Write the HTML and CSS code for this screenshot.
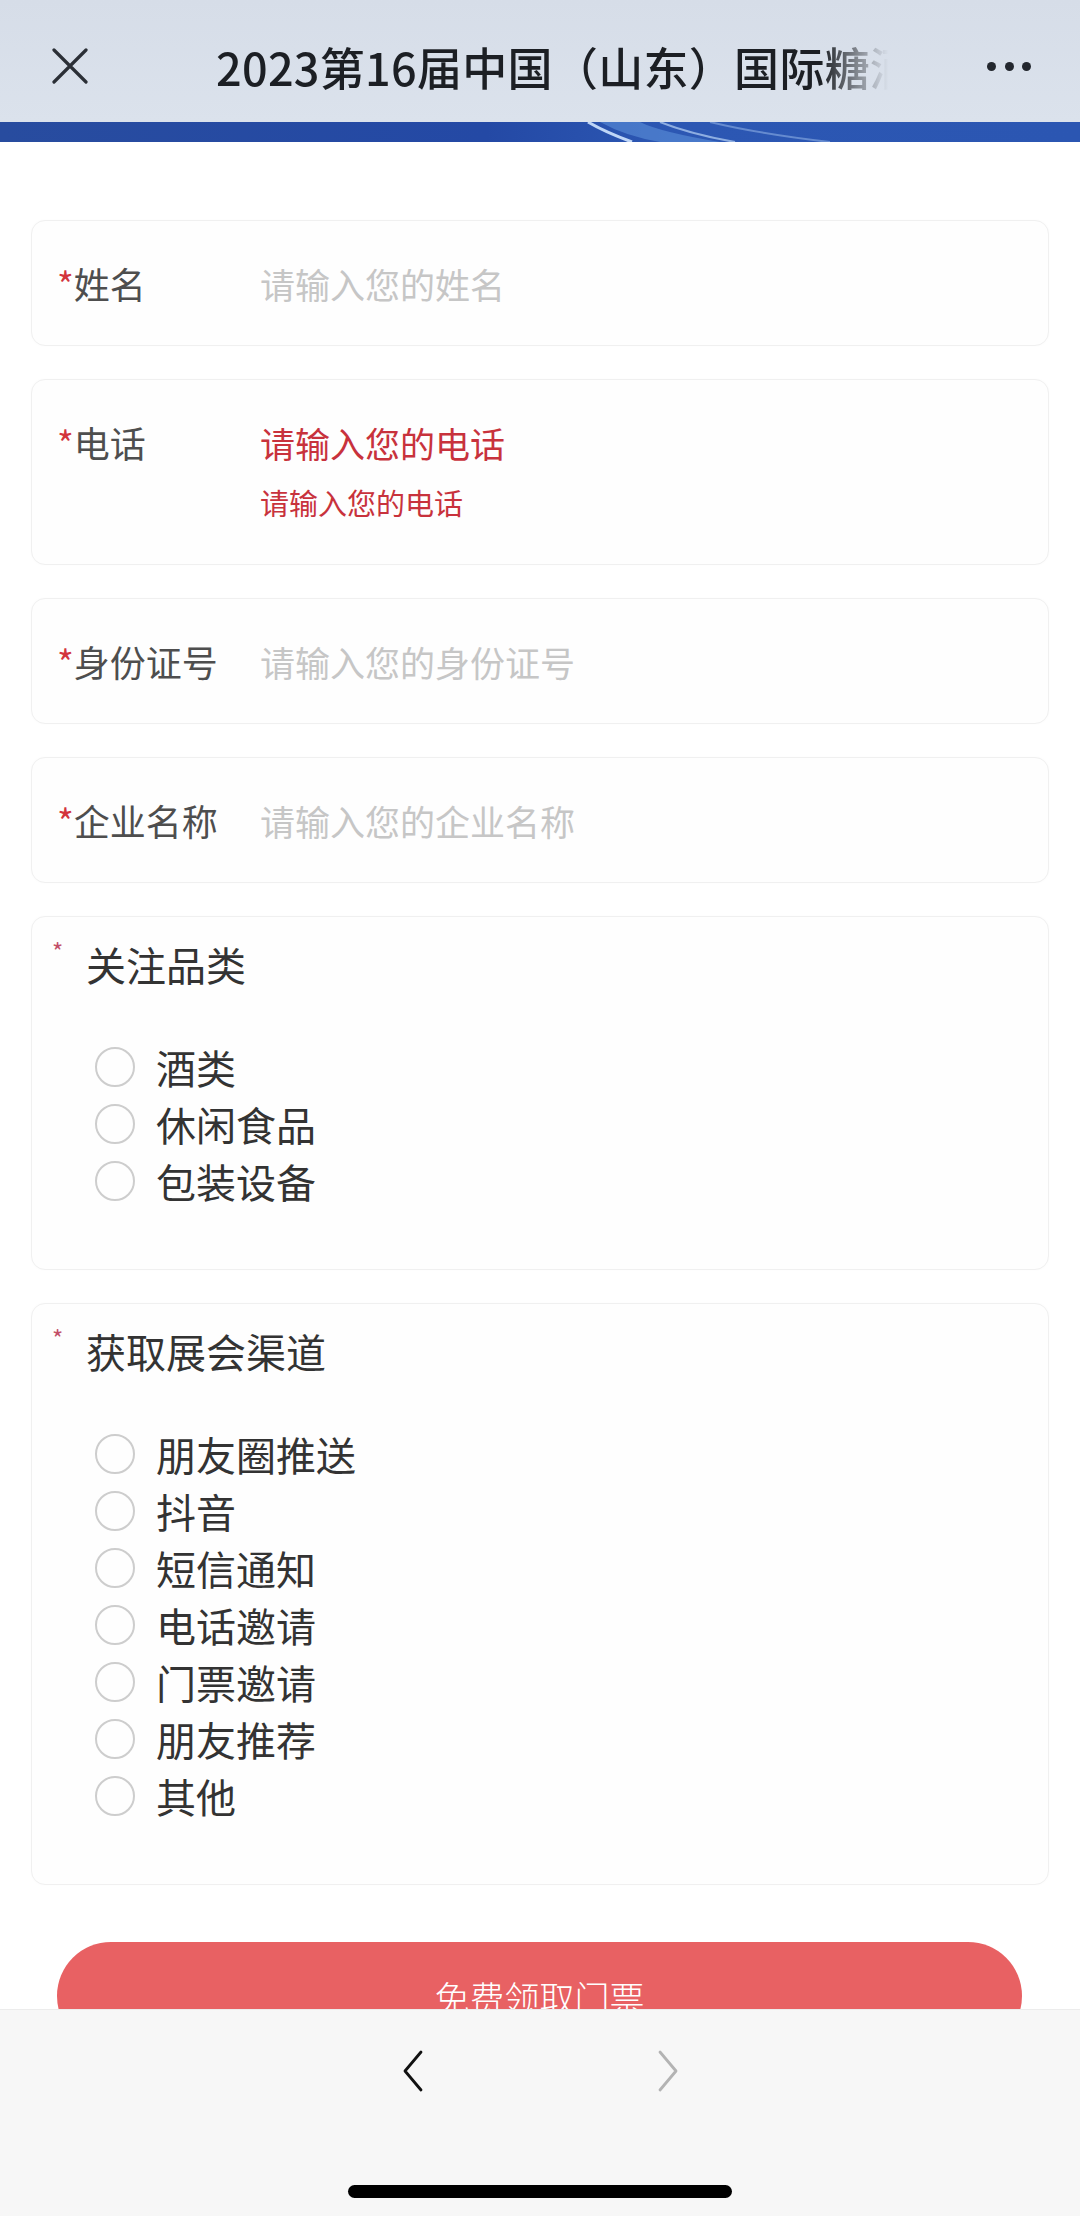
FILE: index.html
```html
<!DOCTYPE html>
<html lang="zh-CN">
<head>
    <meta charset="UTF-8">
    <meta name="viewport" content="width=device-width, initial-scale=1.0">
    <title>免费领取门票</title>
    <link rel="stylesheet" href="styles.css">
</head>
<body>
    <div class="page">
        <!-- Navigation -->
        <div class="nav">
            <div class="nav-bar">
                <div class="nav-close">
                    <svg width="36" height="36" viewBox="0 0 36 36"><path d="M2 2 L34 34 M34 2 L2 34" stroke="#2b2f36" stroke-width="3.2" stroke-linecap="round"/></svg>
                </div>
                <div class="nav-title">2023第16届中国（山东）国际糖酒食品交易会</div>
                <div class="nav-more"><span></span><span></span><span></span></div>
            </div>
            <div class="nav-band">
                <svg width="1080" height="20" viewBox="0 0 1080 20">
                    <path d="M588 0 Q605 10 632 20" stroke="#cfe4ff" stroke-width="3" fill="none" opacity="0.9"/>
                    <path d="M600 0 Q625 14 660 20 L720 20 Q660 10 640 0 Z" fill="#5b8fd8" opacity="0.6"/>
                    <path d="M660 0 Q690 12 735 20" stroke="#b8d3f5" stroke-width="2" fill="none" opacity="0.7"/>
                    <path d="M710 0 Q760 12 830 20" stroke="#9fc0ee" stroke-width="2" fill="none" opacity="0.5"/>
                </svg>
            </div>
        </div>

        <!-- Form -->
        <div class="content">
            <div class="card field">
                <label class="field-label"><span class="req">*</span>姓名</label>
                <div class="field-body">
                    <input class="field-input" type="text" placeholder="请输入您的姓名">
                </div>
            </div>

            <div class="card field field-error">
                <label class="field-label"><span class="req">*</span>电话</label>
                <div class="field-body">
                    <input class="field-input" type="tel" placeholder="请输入您的电话">
                    <div class="field-msg">请输入您的电话</div>
                </div>
            </div>

            <div class="card field">
                <label class="field-label"><span class="req">*</span>身份证号</label>
                <div class="field-body">
                    <input class="field-input" type="text" placeholder="请输入您的身份证号">
                </div>
            </div>

            <div class="card field">
                <label class="field-label"><span class="req">*</span>企业名称</label>
                <div class="field-body">
                    <input class="field-input" type="text" placeholder="请输入您的企业名称">
                </div>
            </div>

            <div class="card group">
                <div class="group-title"><span class="group-req">*</span>关注品类</div>
                <div class="options">
                    <div class="option"><span class="radio"></span>酒类</div>
                    <div class="option"><span class="radio"></span>休闲食品</div>
                    <div class="option"><span class="radio"></span>包装设备</div>
                </div>
            </div>

            <div class="card group">
                <div class="group-title"><span class="group-req">*</span>获取展会渠道</div>
                <div class="options">
                    <div class="option"><span class="radio"></span>朋友圈推送</div>
                    <div class="option"><span class="radio"></span>抖音</div>
                    <div class="option"><span class="radio"></span>短信通知</div>
                    <div class="option"><span class="radio"></span>电话邀请</div>
                    <div class="option"><span class="radio"></span>门票邀请</div>
                    <div class="option"><span class="radio"></span>朋友推荐</div>
                    <div class="option"><span class="radio"></span>其他</div>
                </div>
            </div>

            <button class="submit">免费领取门票</button>
        </div>

        <!-- Browser toolbar -->
        <div class="toolbar">
            <div class="toolbar-nav">
                <svg width="22" height="42" viewBox="0 0 22 42"><path d="M19 2 L3 21 L19 40" stroke="#111" stroke-width="2.8" fill="none" stroke-linecap="round" stroke-linejoin="round"/></svg>
                <svg width="22" height="42" viewBox="0 0 22 42"><path d="M3 2 L19 21 L3 40" stroke="#b3b3b3" stroke-width="2.8" fill="none" stroke-linecap="round" stroke-linejoin="round"/></svg>
            </div>
            <div class="home-indicator"></div>
        </div>
    </div>
</body>
</html>
```

FILE: styles.css
```css
body {
    margin: 0;
    font-family: "Noto Sans CJK SC", "Noto Sans", sans-serif;
    background-color: #ffffff;
}

.page {
    height: 2216px;
    display: flex;
    flex-direction: column;
    overflow: hidden;
}

/* Navigation */
.nav {
    flex-shrink: 0;
}

.nav-bar {
    height: 112px;
    padding-top: 10px;
    display: flex;
    align-items: center;
    background: linear-gradient(180deg, #d6dde8 0%, #dbe2ec 100%);
}

.nav-close {
    margin-left: 52px;
    width: 36px;
    height: 36px;
    display: flex;
}

.nav-title {
    margin-left: 128px;
    width: 672px;
    overflow: hidden;
    white-space: nowrap;
    font-size: 45px;
    font-weight: 500;
    color: #1c1f24;
    letter-spacing: 0.3px;
    -webkit-mask-image: linear-gradient(to right, #000 90%, transparent 100%);
    mask-image: linear-gradient(to right, #000 90%, transparent 100%);
}

.nav-more {
    margin-left: 99px;
    display: flex;
    gap: 8.5px;
}

.nav-more span {
    width: 9px;
    height: 9px;
    border-radius: 50%;
    background-color: #23272e;
}

.nav-band {
    height: 20px;
    background: linear-gradient(90deg, #284c9f 0%, #2449a5 45%, #2c57b3 62%, #2b56b2 100%);
    display: flex;
}

/* Form */
.content {
    flex: 1;
    overflow: hidden;
    padding: 78px 31px 0;
    display: flex;
    flex-direction: column;
    gap: 33px;
}

.card {
    background-color: #fefefe;
    border: 1px solid #f0f0f0;
    border-radius: 14px;
    box-shadow: 0 0 3px rgba(0, 0, 0, 0.02);
    flex-shrink: 0;
}

.field {
    display: flex;
    align-items: flex-start;
    padding: 37px 25px;
}

.field-error {
    padding-bottom: 39px;
}

.field-label {
    width: 203px;
    flex-shrink: 0;
    font-size: 36px;
    line-height: 50px;
    color: #4e4e4e;
}

.req {
    color: #d3343c;
}

.field-body {
    flex: 1;
}

.field-input {
    display: block;
    width: 100%;
    height: 50px;
    padding: 0;
    border: none;
    outline: none;
    background: transparent;
    font-family: inherit;
    font-size: 35px;
    color: #333;
}

.field-input::placeholder {
    color: #c6c6c6;
}

.field-error .field-input::placeholder {
    color: #c8323c;
}

.field-msg {
    margin-top: 12px;
    font-size: 29px;
    line-height: 46px;
    color: #c8323c;
}

.group {
    padding: 19px 25px 60px 20px;
}

.group-title {
    display: flex;
    align-items: flex-start;
    font-size: 40px;
    line-height: 56px;
    color: #333;
}

.group-req {
    width: 34px;
    font-size: 24px;
    line-height: 30px;
    color: #c24f68;
}

.options {
    margin-top: 46px;
    padding-left: 43px;
}

.option {
    height: 57px;
    display: flex;
    align-items: center;
    gap: 21px;
    font-size: 40px;
    color: #333;
}

.radio {
    width: 36px;
    height: 36px;
    border: 2px solid #cdcdcd;
    border-radius: 50%;
    flex-shrink: 0;
}

.submit {
    flex-shrink: 0;
    margin: 24px 27px 0 26px;
    height: 108px;
    border: none;
    border-radius: 54px;
    background-color: #e86163;
    color: #ffffff;
    font-family: inherit;
    font-size: 35px;
    font-weight: 300;
}

/* Browser toolbar */
.toolbar {
    height: 207px;
    flex-shrink: 0;
    box-sizing: border-box;
    background-color: #f7f7f7;
    border-top: 1px solid #ececec;
    display: flex;
    flex-direction: column;
    align-items: center;
    padding: 40px 0 18px;
}

.toolbar-nav {
    display: flex;
    gap: 233px;
}

.home-indicator {
    margin-top: auto;
    width: 384px;
    height: 13px;
    border-radius: 7px;
    background-color: #000;
}
```
